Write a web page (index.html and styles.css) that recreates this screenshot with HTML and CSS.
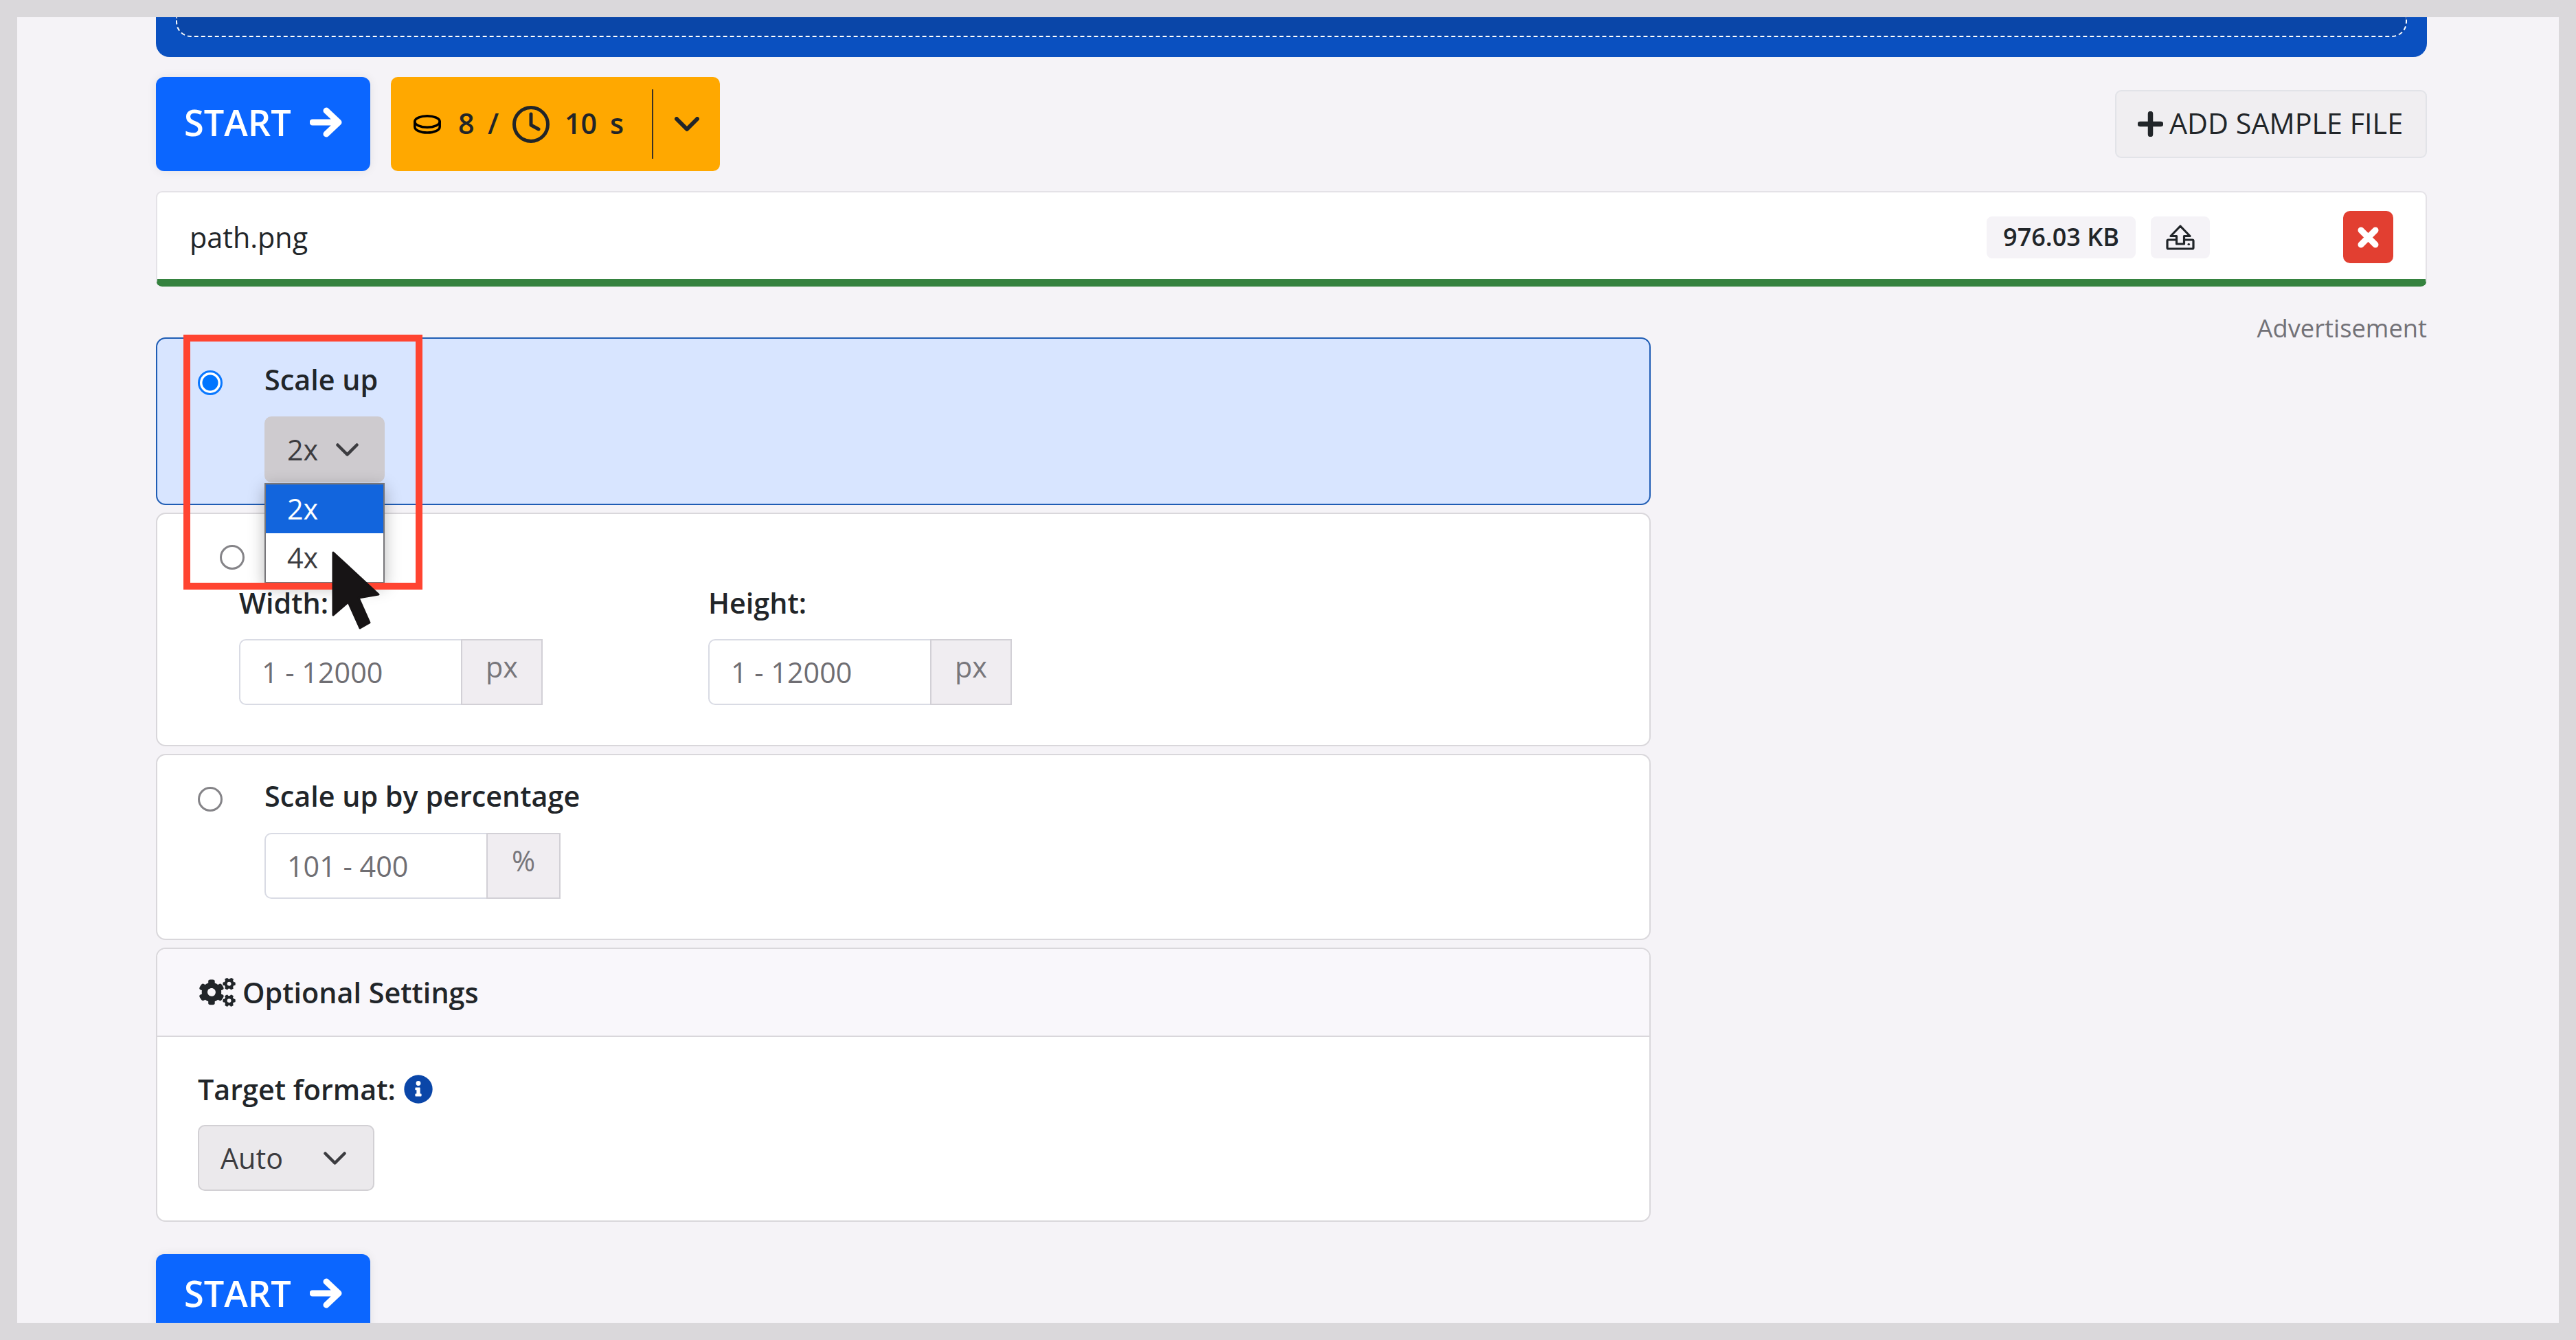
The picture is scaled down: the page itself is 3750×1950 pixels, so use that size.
FILE: index.html
```html
<!DOCTYPE html>
<html lang="en">
<head>
<meta charset="utf-8">
<title>Image upscaler</title>
<link rel="stylesheet" href="styles.css">
</head>
<body>
<main class="page">
  <div class="dropzone"><div class="dropzone-inner"></div></div>

  <div class="toolbar">
    <button class="start"><span>START</span>
      <svg class="arrow" viewBox="0 0 47 44"><path d="M4 22H41M24 5L42 22L24 39"/></svg>
    </button>
    <div class="cost">
      <svg class="coin" viewBox="0 0 40 28"><ellipse cx="20" cy="10" rx="18.200" ry="8.200"/><path d="M1.800 10V17.500C1.800 22.500 10 26 20 26S38.200 22.500 38.200 17.500V10"/></svg>
      <span class="credits">8</span><span class="slash">/</span>
      <svg class="clock" viewBox="0 0 54 54"><circle cx="27" cy="27" r="24.500"/><path d="M27 12V28L38 34"/></svg>
      <span class="secs">10</span><span class="unit">s</span>
      <i class="rule"></i>
      <svg class="cost-chevron" viewBox="0 0 36 22"><path d="M3 3L18 18L33 3"/></svg>
    </div>
    <button class="sample">
      <svg class="plus" viewBox="0 0 37 37"><path d="M18.500 3.500V33.500M3.500 18.500H33.500"/></svg>
      <span>ADD SAMPLE FILE</span>
    </button>
  </div>

  <div class="file">
    <span class="file-name">path.png</span>
    <span class="file-size">976.03 KB</span>
    <span class="file-upload">
      <svg class="upload" viewBox="0 0 42 37"><path d="M21 2L35 16.500H26.500V28H15.500V16.500H7ZM15.500 22H3.500Q2 22 2 23.500V33.500Q2 35 3.500 35H38.500Q40 35 40 33.500V23.500Q40 22 38.500 22H26.500"/><path class="dot" d="M33 28.500h.5"/></svg>
    </span>
    <button class="remove"><svg viewBox="0 0 31 31"><path d="M5 5L26 26M26 5L5 26"/></svg></button>
  </div>

  <div class="columns">
    <section class="options">
      <div class="card card-scale">
        <i class="radio on"></i>
        <div class="body">
          <div class="label">Scale up</div>
          <div class="select open"><span>2x</span><svg class="chevron" viewBox="0 0 33 19"><path d="M2.500 2.500L16.500 16.500L30.500 2.500"/></svg>
            <div class="menu"><div class="item picked">2x</div><div class="item">4x</div></div>
          </div>
        </div>
      </div>

      <div class="card card-size">
        <i class="radio"></i>
        <div class="fields">
          <div class="field"><div class="label">Width:</div><div class="group"><span class="input">1 - 12000</span><span class="addon">px</span></div></div>
          <div class="field"><div class="label">Height:</div><div class="group"><span class="input">1 - 12000</span><span class="addon">px</span></div></div>
        </div>
      </div>

      <div class="card card-percent">
        <i class="radio"></i>
        <div class="body">
          <div class="label">Scale up by percentage</div>
          <div class="group"><span class="input">101 - 400</span><span class="addon narrow">%</span></div>
        </div>
      </div>

      <div class="card card-settings">
        <div class="settings-head">
          <svg class="gears" viewBox="0 0 640 512"><path d="M512.100 191l-8.200 14.300c-3 5.300-9.400 7.500-15.100 5.400-11.800-4.400-22.600-10.700-32.100-18.600-4.600-3.800-5.800-10.500-2.800-15.700l8.200-14.300c-6.900-8-12.300-17.300-15.900-27.400h-16.500c-6 0-11.200-4.300-12.200-10.300-2-12-2.100-24.600 0-37.100 1-6 6.200-10.400 12.200-10.400h16.500c3.600-10.100 9-19.400 15.900-27.400l-8.200-14.300c-3-5.200-1.900-11.900 2.800-15.700 9.500-7.900 20.400-14.200 32.100-18.600 5.700-2.100 12.100.1 15.100 5.400l8.200 14.300c10.500-1.900 21.200-1.900 31.700 0L552 6.300c3-5.300 9.400-7.500 15.100-5.400 11.800 4.400 22.600 10.700 32.100 18.600 4.600 3.800 5.800 10.500 2.800 15.700l-8.200 14.300c6.900 8 12.300 17.300 15.900 27.400h16.500c6 0 11.200 4.300 12.200 10.300 2 12 2.100 24.600 0 37.100-1 6-6.200 10.400-12.200 10.400h-16.500c-3.600 10.100-9 19.400-15.900 27.400l8.200 14.300c3 5.200 1.900 11.900-2.800 15.700-9.500 7.900-20.400 14.200-32.100 18.600-5.700 2.100-12.100-.1-15.100-5.400l-8.200-14.300c-10.400 1.900-21.200 1.900-31.700 0zm-10.500-58.800c38.500 29.600 82.400-14.300 52.800-52.800-38.500-29.700-82.400 14.300-52.800 52.800zM386.300 286.100l33.700 16.800c10.100 5.800 14.500 18.100 10.500 29.100-8.900 24.200-26.400 46.400-42.600 65.800-7.400 8.900-20.200 11.100-30.300 5.300l-29.100-16.800c-16 13.700-34.600 24.600-54.900 31.700v33.600c0 11.600-8.300 21.600-19.700 23.600-24.600 4.200-50.400 4.400-75.900 0-11.500-2-20-11.900-20-23.600V418c-20.300-7.200-38.900-18-54.900-31.700L74 403c-10 5.800-22.900 3.600-30.300-5.300-16.200-19.400-33.300-41.600-42.200-65.700-4-10.900.4-23.200 10.500-29.100l33.300-16.800c-3.900-20.900-3.900-42.400 0-63.400L12 205.800c-10.100-5.800-14.600-18.100-10.500-29 8.900-24.200 26-46.400 42.200-65.800 7.400-8.900 20.200-11.100 30.300-5.300l29.100 16.800c16-13.700 34.600-24.600 54.900-31.700V57.100c0-11.500 8.200-21.500 19.600-23.500 24.600-4.200 50.500-4.400 76-.1 11.500 2 20 11.900 20 23.600v33.600c20.300 7.200 38.900 18 54.900 31.700l29.100-16.800c10-5.800 22.900-3.600 30.300 5.300 16.200 19.400 33.200 41.600 42.100 65.800 4 10.900.1 23.200-10 29.100l-33.700 16.800c3.900 21 3.900 42.500 0 63.500zm-117.600 21.100c59.200-77-28.700-164.900-105.700-105.700-59.200 77 28.700 164.900 105.700 105.700zm243.400 182.700l-8.200 14.300c-3 5.300-9.400 7.500-15.100 5.400-11.800-4.400-22.600-10.700-32.100-18.600-4.600-3.800-5.800-10.500-2.800-15.700l8.200-14.300c-6.900-8-12.300-17.300-15.900-27.400h-16.500c-6 0-11.200-4.300-12.200-10.300-2-12-2.100-24.600 0-37.100 1-6 6.200-10.400 12.200-10.400h16.500c3.600-10.100 9-19.400 15.900-27.400l-8.200-14.300c-3-5.200-1.900-11.900 2.800-15.700 9.500-7.900 20.400-14.200 32.100-18.600 5.700-2.100 12.100.1 15.100 5.400l8.200 14.300c10.500-1.900 21.200-1.900 31.700 0l8.200-14.300c3-5.300 9.400-7.500 15.100-5.400 11.800 4.400 22.600 10.700 32.100 18.600 4.600 3.800 5.800 10.500 2.800 15.700l-8.200 14.300c6.900 8 12.300 17.300 15.900 27.400h16.500c6 0 11.200 4.300 12.200 10.300 2 12 2.100 24.600 0 37.100-1 6-6.200 10.400-12.200 10.400h-16.500c-3.600 10.100-9 19.400-15.900 27.400l8.200 14.300c3 5.200 1.900 11.900-2.800 15.700-9.500 7.900-20.400 14.200-32.100 18.600-5.700 2.100-12.100-.1-15.100-5.400l-8.200-14.300c-10.400 1.900-21.200 1.900-31.700 0zM501.600 431c38.500 29.600 82.400-14.300 52.800-52.800-38.500-29.600-82.400 14.300-52.800 52.800z"/></svg>
          <span>Optional Settings</span>
        </div>
        <div class="settings-body">
          <div class="label">Target format:
            <svg class="info" viewBox="0 0 512 512"><circle cx="256" cy="256" r="252"/><path d="M256 110a42 42 0 1 1 0 84a42 42 0 1 1 0-84zm56 262c0 7-5 12-12 12h-88c-7 0-12-5-12-12v-24c0-7 5-12 12-12h12v-64h-12c-7 0-12-5-12-12v-24c0-7 5-12 12-12h64c7 0 12 5 12 12v100h12c7 0 12 5 12 12z"/></svg>
          </div>
          <div class="select wide"><span>Auto</span><svg class="chevron" viewBox="0 0 33 19"><path d="M2.500 2.500L16.500 16.500L30.500 2.500"/></svg></div>
        </div>
      </div>

      <button class="start start-bottom"><span>START</span>
        <svg class="arrow" viewBox="0 0 47 44"><path d="M4 22H41M24 5L42 22L24 39"/></svg>
      </button>
    </section>
    <aside class="ad">Advertisement</aside>
  </div>

  <div class="highlight"></div>
  <svg class="cursor" viewBox="0 0 70 114"><path d="M2 2L68 63L39 68L55 104L41 112L24 74L2 93Z"/></svg>
</main>
</body>
</html>
```
FILE: styles.css
```css
* { box-sizing: border-box; }
body {
  margin: 0;
  width: 3750px;
  height: 1950px;
  padding: 25px;
  overflow: hidden;
  background: #dad8db;
  font: 400 41.3px/60px "Open Sans", "Noto Sans", sans-serif;
  color: #212529;
}
button { font: inherit; border: 0; margin: 0; padding: 0; }
svg { display: block; flex: none; fill: none; stroke: currentColor; stroke-linecap: round; stroke-linejoin: round; }
span { white-space: nowrap; }

.page {
  position: relative;
  height: 1900px;
  padding: 0 192px 0 202px;
  overflow: hidden;
  background: #f5f3f7;
}

.dropzone {
  height: 58px;
  padding: 0 29px 29px;
  background: #0a50c0;
  border-radius: 0 0 20px 20px;
}
.dropzone-inner {
  height: 29px;
  background: #0a46a8;
  border: 2px dashed #fff;
  border-top: 0;
  border-radius: 0 0 22px 22px;
}

.toolbar { display: flex; align-items: center; height: 137px; margin-top: 29px; }
.start {
  display: flex;
  align-items: center;
  width: 312px;
  height: 137px;
  padding: 0 41px 5px;
  border-radius: 12px;
  background: #0b66ff;
  box-shadow: 0 0 14px rgba(0, 0, 0, .08);
  color: #fff;
  font-size: 52.3px;
  font-weight: 600;
}
.arrow { width: 47px; height: 44px; margin-left: auto; stroke-width: 9; }
.cost {
  display: flex;
  align-items: center;
  width: 479px;
  height: 137px;
  margin-left: 30px;
  padding-left: 33px;
  border-radius: 10px;
  background: #ffa800;
  font-weight: 600;
}
.cost span { padding-bottom: 4px; }
.coin { width: 40px; height: 28px; color: #000; stroke-width: 3.5; }
.credits { width: 43px; margin-left: 25px; }
.slash { width: 36px; }
.clock { width: 54px; height: 54px; stroke-width: 5; }
.secs { width: 66px; margin-left: 22px; }
.unit { width: 61px; }
.rule { width: 2px; height: 101px; background: #3a3026; }
.cost-chevron { width: 36px; height: 22px; margin-left: 31px; stroke-width: 6; }
.sample {
  display: flex;
  align-items: center;
  gap: 9px;
  width: 454px;
  height: 99px;
  margin-left: auto;
  padding-left: 31px;
  background: #f0eef1;
  border: 2px solid #e2e3e8;
  border-radius: 9px;
  color: #212529;
}
.sample span { padding-bottom: 3px; }
.plus { width: 37px; height: 37px; stroke-width: 7.5; }

.file {
  display: flex;
  align-items: center;
  height: 139px;
  margin-top: 29px;
  padding: 4px 47px 0 47px;
  background: #fff;
  border: 2px solid #e4e2e7;
  border-bottom: 11px solid #35823f;
  border-radius: 9px;
}
.file-name { margin-right: auto; }
.file-size, .file-upload {
  display: flex;
  align-items: center;
  justify-content: center;
  height: 61px;
  background: #f5f3f7;
  border-radius: 8px;
}
.file-size { width: 217px; font-size: 36px; font-weight: 600; }
.file-upload { width: 86px; margin: 0 194px 0 22px; }
.upload { width: 42px; height: 37px; stroke-width: 3.2; }
.remove {
  display: flex;
  align-items: center;
  justify-content: center;
  width: 73px;
  height: 76px;
  border-radius: 10px;
  background: #e23f31;
  color: #fff;
}
.remove svg { width: 31px; height: 31px; stroke-width: 9; }

.columns { display: flex; justify-content: space-between; }
.options { width: 2176px; padding-top: 74px; }
.ad { margin-top: 30px; font-size: 36.3px; color: #727177; }

.card {
  display: flex;
  margin-bottom: 11px;
  background: #fff;
  border: 2px solid #d9d7db;
  border-radius: 14px;
}
.card-scale { height: 244px; background: #d8e5ff; border-color: #1f5cb4; }
.card-size { flex-direction: column; height: 340px; }
.card-percent { height: 271px; }
.card-settings { flex-direction: column; height: 399px; margin-bottom: 47px; overflow: hidden; }

.radio {
  flex: none;
  width: 36px;
  height: 36px;
  margin: 46px 0 0 59px;
  border: 3px solid #858488;
  border-radius: 50%;
  background: #fff;
}
.radio.on { border-color: #0a78ff; background: radial-gradient(circle, #0075ff 11px, #fff 12px); }
.card-size .radio { margin: 45px 0 0 91px; }
.body { margin: 29px 0 0 61px; }
.label { font-weight: 600; white-space: nowrap; }
.body .label { margin-bottom: 24px; }

.select {
  position: relative;
  display: flex;
  align-items: center;
  height: 96px;
  padding-left: 31px;
  border: 2px solid #d2d0d4;
  border-radius: 10px;
  background: #ebe9ec;
  color: #3c3c40;
}
.select.open { width: 175px; background: #cecbcf; border-color: #cecbcf; }
.select.wide { width: 257px; }
.chevron { width: 33px; height: 19px; margin: 0 36px 0 auto; stroke-width: 4.5; }
.wide .chevron { margin-right: 39px; }
.menu {
  position: absolute;
  z-index: 2;
  top: 95px;
  left: -2px;
  width: 175px;
  border: 2px solid #77767a;
  background: #fff;
  box-shadow: 0 6px 22px rgba(0, 0, 0, .28);
}
.item { height: 71px; padding-left: 31px; line-height: 70px; }
.picked { background: #1265dd; color: #fff; }

.fields { display: flex; margin: 18px 0 0 119px; }
.field { width: 683px; }
.field .label { margin-bottom: 23px; }
.group { display: flex; }
.input {
  width: 325px;
  height: 96px;
  padding-left: 31px;
  border: 2px solid #d9dbe4;
  border-radius: 10px 0 0 10px;
  line-height: 93px;
  color: #6f6e73;
}
.addon {
  width: 119px;
  height: 96px;
  margin-left: -2px;
  border: 2px solid #d2d0d6;
  background: #f0edf1;
  line-height: 77px;
  text-align: center;
  color: #77767b;
}
.narrow { width: 108px; }

.settings-head {
  display: flex;
  align-items: center;
  gap: 10px;
  height: 128px;
  padding-left: 61px;
  background: #f9f7fb;
  border-bottom: 2px solid #d9d7db;
  font-weight: 600;
}
.gears { width: 53px; height: 42px; fill: currentColor; stroke: none; }
.settings-body { padding: 46px 0 0 59px; }
.settings-body .label { display: flex; align-items: center; gap: 12px; margin-bottom: 22px; }
.info { width: 42px; height: 42px; stroke: none; fill: #0a46a8; }
.info path { fill: #fff; }
.start-bottom { padding-bottom: 23px; }

.highlight {
  position: absolute;
  z-index: 3;
  left: 242px;
  top: 462px;
  width: 348px;
  height: 371px;
  border: 10px solid #ff4431;
}
.cursor {
  position: absolute;
  z-index: 4;
  left: 458px;
  top: 777px;
  width: 70px;
  height: 114px;
  fill: #171415;
  stroke: #171415;
  stroke-width: 3;
}
```
